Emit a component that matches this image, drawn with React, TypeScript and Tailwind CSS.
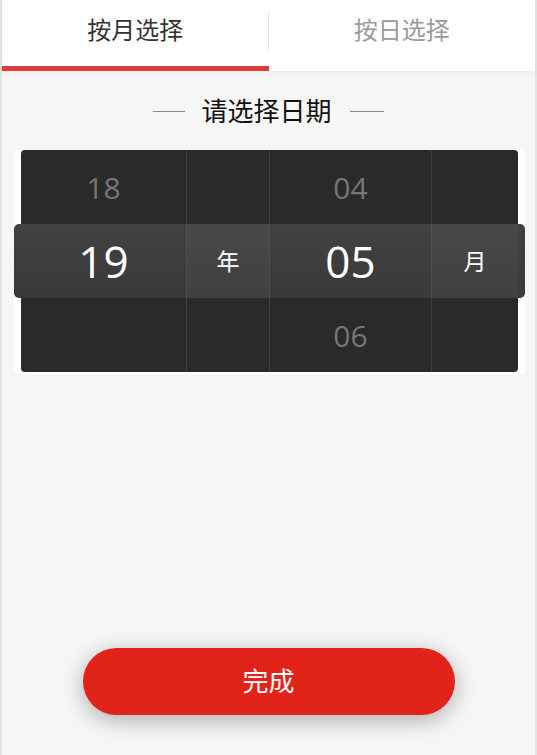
import React from 'react';

const font = "font-['Open_Sans','Noto_Sans_CJK_SC',sans-serif]";

function Tabs() {
  return (
    <div className="relative z-10 flex h-[71px] bg-white shadow-[0_2px_6px_rgba(0,0,0,0.06)]">
      <div className="relative flex flex-1 justify-center border-b-[5px] border-[#e0393e]">
        <span className="pt-[12px] text-[24px] leading-[36px] text-[#333]">按月选择</span>
        <span className="absolute right-0 top-[12px] h-[39px] w-px bg-[#e2e2e2]" />
      </div>
      <div className="flex flex-1 justify-center">
        <span className="pt-[12px] text-[24px] leading-[36px] text-[#9a9a9a]">按日选择</span>
      </div>
    </div>
  );
}

function Column({ items, label, width }: { items: string[]; label?: boolean; width: string }) {
  return (
    <div className={`relative z-10 flex flex-col border-l border-white/10 first:border-l-0 ${width}`}>
      {items.map((t, i) => (
        <div
          key={i}
          className={`flex h-[74px] items-center justify-center ${
            i === 1
              ? label
                ? 'bg-white/[0.04] text-[23px] text-white'
                : 'text-[44px] text-white'
              : 'text-[30px] text-[#767676]'
          }`}
        >
          {t}
        </div>
      ))}
    </div>
  );
}

function Picker() {
  return (
    <div className="relative ml-[12px] mr-[10px] mt-[21px] rounded-[3px] bg-white px-[7px] pb-[2px]">
      {/* selection band */}
      <div className="absolute left-0 right-0 top-[74px] h-[74px] rounded-[5px] bg-gradient-to-b from-[#424242] to-[#393939]" />
      <div className="flex h-[222px] rounded-[4px] bg-[#2a2a2a]">
        <Column width="w-[165px]" items={['18', '19', '']} />
        <Column width="w-[83px]" label items={['', '年', '']} />
        <Column width="w-[162px]" items={['04', '05', '06']} />
        <Column width="flex-1" label items={['', '月', '']} />
      </div>
    </div>
  );
}

export default function App() {
  return (
    <div className={`${font} flex h-[755px] flex-col border-x-2 border-[#e4e4e4] bg-[#f6f6f6]`}>
      <Tabs />
      <div className="mt-[22px] flex items-center justify-center">
        <span className="h-px w-[32px] bg-[#8a8a8a]" />
        <span className="ml-[16px] mr-[18px] text-[26px] leading-[36px] text-[#111]">请选择日期</span>
        <span className="h-px w-[34px] bg-[#8a8a8a]" />
      </div>
      <Picker />
      <div className="mt-auto flex justify-center pb-[40px]">
        <button className="h-[67px] w-[372px] rounded-full bg-[#e2231a] text-[26px] text-white shadow-[0_5px_22px_rgba(0,0,0,0.3)]">
          完成
        </button>
      </div>
    </div>
  );
}
